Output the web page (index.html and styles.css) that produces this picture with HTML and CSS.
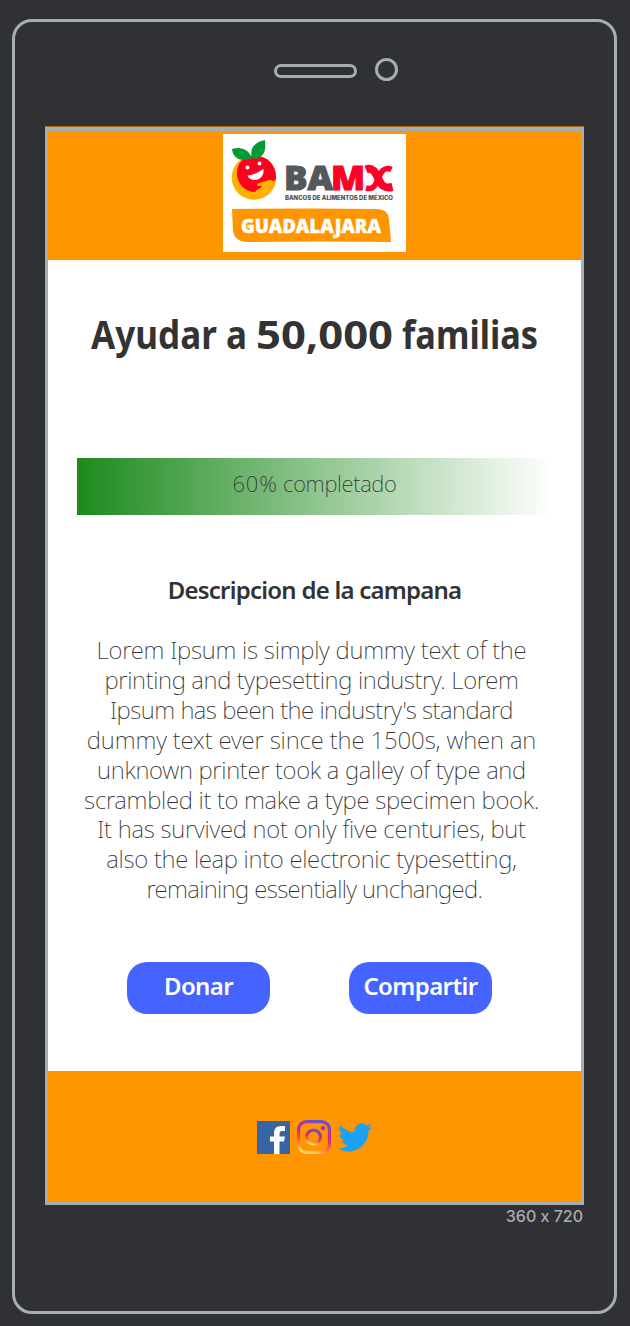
FILE: index.html
```html
<!DOCTYPE html>
<html lang="es">
<head>
<meta charset="utf-8">
<title>BAMX Guadalajara</title>
<link rel="stylesheet" href="styles.css">
</head>
<body>
<div class="phone">
  <div class="sensors"><span class="speaker"></span><span class="camera"></span></div>
  <main class="screen">
    <header class="header">
      <svg class="logo" width="183" height="118" viewBox="0 0 183 118">
        <circle cx="31" cy="43.500" r="22.300" fill="#ffb000"/>
        <path d="M14 41C13 29 21 22 31.500 21.500C45 22 53 31 53 43C53 45.500 52 47 50.500 47C49 47 48 45 46 46L36 49C33 50 34 52 36 52L39 51.500C39 54 34 55 32 58C23 58 15 51 14 41Z" fill="#ff001f"/>
        <path d="M29 24C26 15 17 12 9 15C10 24 17 28 27 25ZM29 24C26 14 32 8 42 6C43 16 42 22 33 25Z" fill="#009b35"/>
        <path d="M24.500 41.500C30 41 36 38 40.500 35C42 47 27 49 24.500 41.500Z" fill="#fff"/>
        <circle cx="24.500" cy="33.500" r="1.900" fill="#fff"/><circle cx="36.500" cy="29.500" r="1.900" fill="#fff"/>
        <g class="wordmark">
          <text x="61" y="56" textLength="49" lengthAdjust="spacingAndGlyphs" fill="#54585c" stroke="#54585c">BA</text>
          <text x="108" y="56" textLength="34" lengthAdjust="spacingAndGlyphs" fill="#ff0026" stroke="#ff0026">M</text>
        </g>
        <path d="M143 35.500C149 33 152 37 155 44C158 51 161 55 169.500 53" fill="none" stroke="#ff0026" stroke-width="8"/>
        <path d="M168.500 35.500C161 32 158 38 155 45C152 52 150 56 143 54" fill="none" stroke="#ff0026" stroke-width="5.500"/>
        <text class="tagline" x="62" y="65.500" textLength="108" lengthAdjust="spacingAndGlyphs">BANCOS DE ALIMENTOS DE MÉXICO</text>
        <path d="M9 75Q90 74 154 75Q165 75 166 85L168 108Q95 107 25 108Q12 108 10 97Z" fill="#ff9500"/>
        <text class="city" x="18" y="99" textLength="140" lengthAdjust="spacingAndGlyphs">GUADALAJARA</text>
      </svg>
    </header>
    <section class="content">
      <h1 class="title"><svg width="460" height="56" viewBox="0 0 460 56">
        <text x="2" y="40.500" textLength="156" lengthAdjust="spacingAndGlyphs">Ayudar a</text>
        <text x="167" y="40.500" textLength="137" lengthAdjust="spacingAndGlyphs">50,000</text>
        <text x="313" y="40.500" textLength="136" lengthAdjust="spacingAndGlyphs">familias</text>
      </svg></h1>
      <div class="progress"><span class="percent">60%</span> completado</div>
      <h2 class="subtitle">Descripcion de la campana</h2>
      <p class="description">
        <span class="l1">Lorem Ipsum is simply dummy text of the</span>
        <span class="l2">printing and typesetting industry. Lorem</span>
        <span class="l3">Ipsum has been the industry's standard</span>
        <span class="l4">dummy text ever since the 1500s, when an</span>
        <span class="l5">unknown printer took a galley of type and</span>
        <span class="l6">scrambled it to make a type specimen book.</span>
        <span class="l7">It has survived not only five centuries, but</span>
        <span class="l8">also the leap into electronic typesetting,</span>
        <span class="l9">remaining essentially unchanged.</span>
      </p>
      <div class="actions"><button class="button">Donar</button><button class="button">Compartir</button></div>
    </section>
    <footer class="footer">
      <svg width="33" height="33" viewBox="0 0 33 33"><path fill="#3764a3" d="M0 0H33V33H0Z"/><path fill="#fff" d="M17 33V20.500H13V15.500H17V12Q17 5 24 5H28V10H25Q22.500 10 22.500 13V15.500H28L27 20.500H22.500V33Z"/></svg>
      <svg width="34" height="34" viewBox="0 0 34 34"><defs><linearGradient id="ig" x1=".35" y1="1" x2=".65" y2="0"><stop offset="0" stop-color="#ffd85b"/><stop offset=".22" stop-color="#ff7138"/><stop offset=".52" stop-color="#d72d75"/><stop offset=".8" stop-color="#a638a5"/><stop offset="1" stop-color="#6950cb"/></linearGradient></defs><g fill="none" stroke="url(#ig)" stroke-width="3.200"><rect x="1.600" y="1.600" width="30.800" height="30.800" rx="8"/><circle cx="16.500" cy="17" r="7"/></g><circle cx="26" cy="8" r="2.200" fill="#b52c99"/></svg>
      <svg width="34" height="29" viewBox="0 0 24 20"><path fill="#1da1f2" d="M24 2.400c-.9.400-1.800.7-2.800.8 1-.6 1.800-1.600 2.200-2.700-1 .6-2 1-3.100 1.200A4.900 4.900 0 0 0 11.900 6.200C7.800 6 4.200 4.100 1.700 1.100A4.900 4.900 0 0 0 3.200 7.700c-.8 0-1.600-.2-2.200-.6 0 2.300 1.600 4.400 3.900 4.900-.7.200-1.500.2-2.200.1.600 2 2.400 3.400 4.600 3.400A9.900 9.900 0 0 1 0 17.600 14 14 0 0 0 7.500 19.800c9.100 0 14.300-7.700 14-14.600 1-.7 1.800-1.600 2.500-2.800z"/></svg>
    </footer>
  </main>
  <div class="dimensions">360 x 720</div>
</div>
</body>
</html>
```

FILE: styles.css
```css
* { box-sizing: border-box; }
body { margin: 0; padding: 19px 12px 12px 12px; height: 1326px; overflow: hidden; background: #303135; font-family: "Noto Sans", sans-serif; color: #333; }
.phone { width: 605px; height: 1295px; border: 3px solid #a8adb0; border-radius: 20px; padding: 36px 30px 0; }
.sensors { height: 69px; display: flex; gap: 18px; align-items: flex-start; padding-left: 229px; }
.speaker { width: 83px; height: 14px; margin-top: 6px; border: 3px solid #a8adb0; border-radius: 7px; }
.camera { width: 23px; height: 23px; border: 3px solid #a8adb0; border-radius: 50%; }
.screen { width: 539px; height: 1078px; border: 3px solid #a8adb0; border-top-width: 4px; background: #fff; box-shadow: 0 -1px 0 #a66b18; }
.header { height: 129px; background: #ff9500; display: flex; justify-content: center; padding-top: 3px; }
.logo { background: #fff; }
.wordmark { font: 900 33px "Noto Sans", sans-serif; stroke-width: 1px; }
.tagline { font: 800 5.500px Inter, sans-serif; fill: #484b50; }
.city { font: 900 18.500px "Noto Sans", sans-serif; fill: #fff; stroke: #fff; stroke-width: .4px; }
.content { height: 811px; padding: 48px 29px 0; text-align: center; }
.title { height: 56px; margin: 0; font-size: 39px; font-weight: 700; }
.title svg { display: block; margin-left: 12px; fill: #333; }
.progress { height: 57px; margin-top: 94px; line-height: 51px; font-size: 22px; font-weight: 200; letter-spacing: -.3px; background: linear-gradient(90deg, #1d8a1d, #fff); }
.percent { letter-spacing: .8px; }
.subtitle { margin: 57px 0 0; height: 36px; font-size: 24px; line-height: 36px; font-weight: 600; letter-spacing: -.77px; }
.description { margin: 27px 0 0; font-size: 24px; line-height: 29.900px; font-weight: 200; }
.description span { display: block; white-space: nowrap; padding-right: 6px; }
.description .l1 { letter-spacing: -.25px; }
.description .l2 { letter-spacing: -.35px; }
.description .l3 { letter-spacing: -.5px; }
.description .l4 { letter-spacing: -.13px; }
.description .l5, .description .l6 { letter-spacing: -.3px; }
.description .l7 { letter-spacing: -.25px; }
.description .l8 { letter-spacing: -.29px; }
.description .l9 { letter-spacing: -.62px; padding-right: 0; }
.actions { display: flex; gap: 79px; margin: 58px 0 0 50px; }
.button { width: 143px; height: 52px; padding: 0 0 5px; border: 0; border-radius: 20px; background: #4563ff; color: #fff; font: 600 24px "Noto Sans", sans-serif; letter-spacing: -.6px; }
.footer { height: 131px; padding-top: 1px; display: flex; justify-content: center; align-items: center; gap: 7px; background: #ff9500; }
.dimensions { width: 538px; text-align: right; font: 500 16px/23px Inter, sans-serif; font-feature-settings: "calt" 0; color: #a8adb0; }
```
